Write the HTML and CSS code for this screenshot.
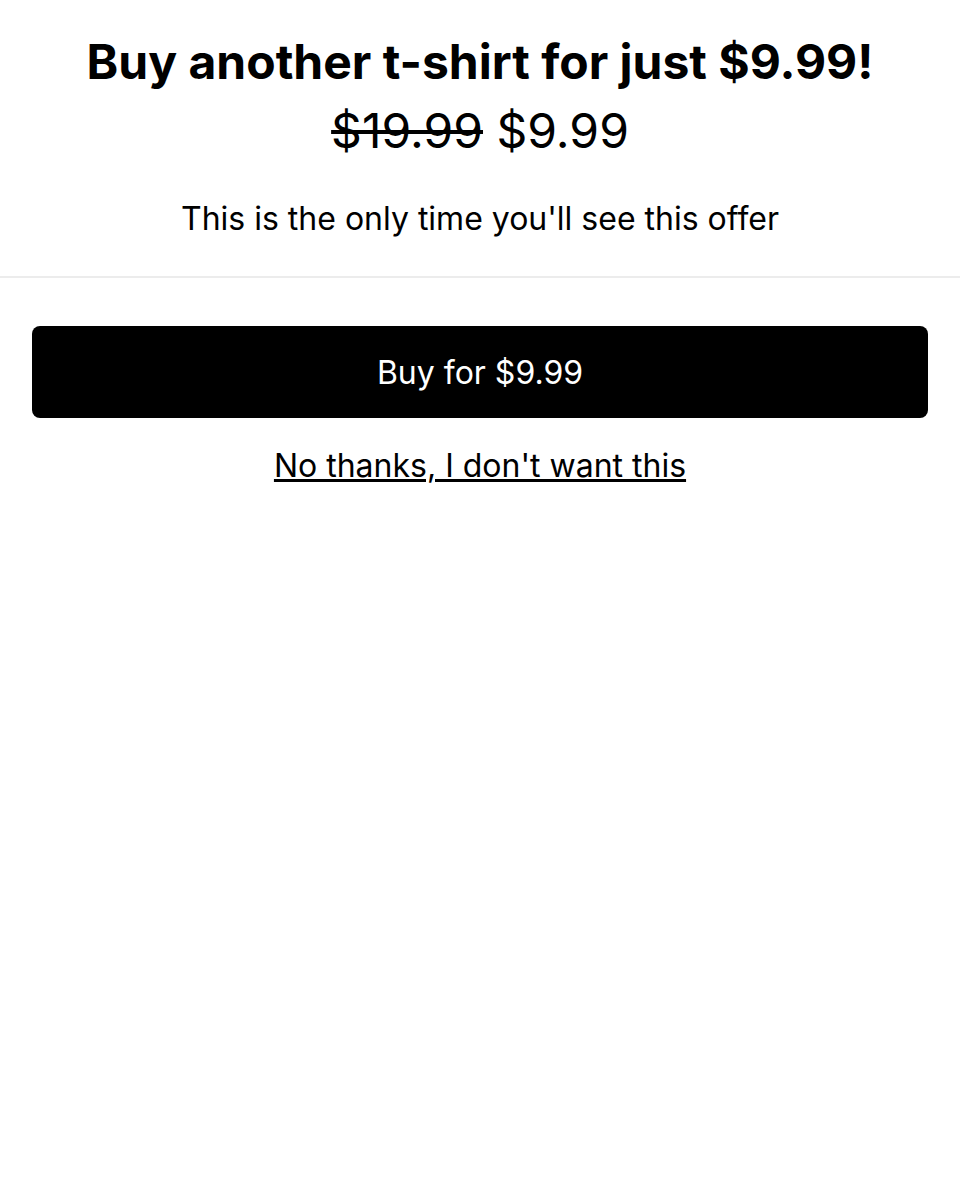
FILE: index.html
```html
<!DOCTYPE html>
<html>
<head>
<meta charset="utf-8">
<link rel="stylesheet" href="styles.css">
</head>
<body>
<header class="offer">
  <h1 class="title">Buy another t-shirt for just $9.99!</h1>
  <div class="price"><s class="old">$19.99</s> <span class="new">$9.99</span></div>
  <p class="note">This is the only time you'll see this offer</p>
</header>
<section class="actions">
  <button class="buy">Buy for $9.99</button>
  <a class="decline" href="#">No thanks, I don't want this</a>
</section>
</body>
</html>
```
FILE: styles.css
```css
html, body {
  margin: 0;
  padding: 0;
  background: #fff;
  color: #000;
  font-family: Inter, "Noto Sans", sans-serif;
}
.offer {
  text-align: center;
  padding: 31px 32px 37px;
  border-bottom: 2px solid #ececec;
}
.title {
  margin: 0;
  font-size: 48px;
  font-weight: 700;
  line-height: 62px;
}
.price {
  margin-top: 7px;
  font-size: 48px;
  font-weight: 400;
  line-height: 62px;
}
.note {
  margin: 37px 0 0;
  font-size: 32px;
  line-height: 40px;
}
.actions {
  padding: 48px 32px;
  display: flex;
  flex-direction: column;
  align-items: center;
  gap: 28px;
}
.buy {
  width: 100%;
  height: 92px;
  background: #000;
  color: #fff;
  border: none;
  border-radius: 8px;
  font-family: Inter, "Noto Sans", sans-serif;
  font-size: 32px;
}
.decline {
  color: #000;
  font-size: 32px;
  line-height: 40px;
  text-decoration: underline;
}
```
